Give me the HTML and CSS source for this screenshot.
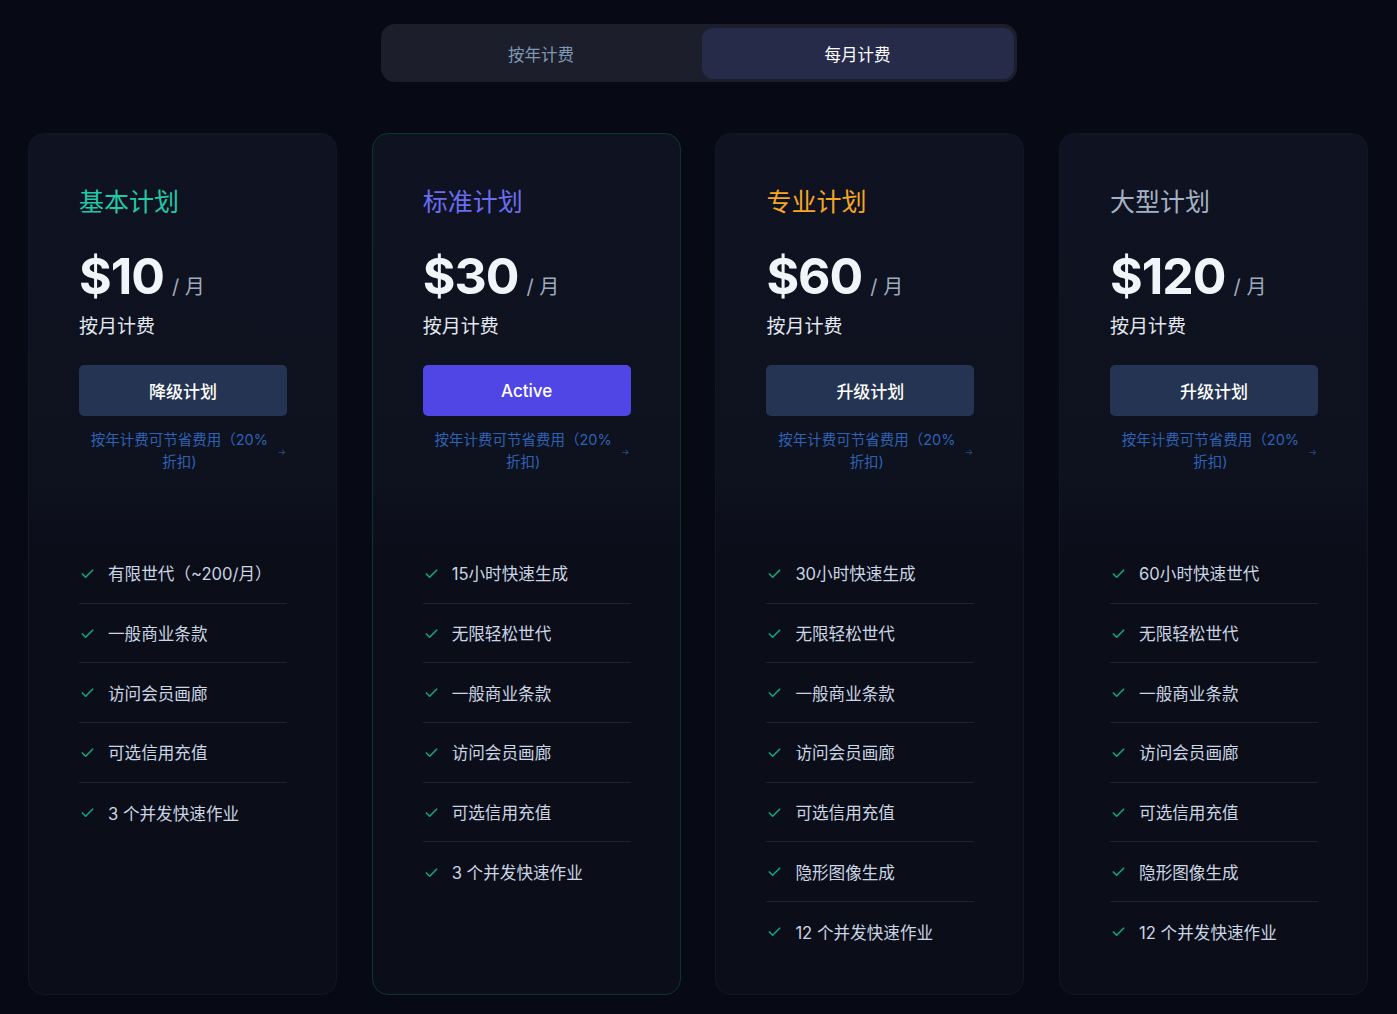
FILE: index.html
```html
<!DOCTYPE html>
<html lang="zh">
<head>
<meta charset="utf-8">
<title>Pricing</title>
<link rel="stylesheet" href="styles.css">
</head>
<body>
<div class="page">
  <div class="toggle">
    <button class="toggle-btn">按年计费</button>
    <button class="toggle-btn active">每月计费</button>
  </div>

  <div class="cards">
    <div class="card">
      <div class="card-top">
        <h2 class="title teal">基本计划</h2>
        <div class="price"><span class="amount">$10</span><span class="per">/ 月</span></div>
        <div class="billing">按月计费</div>
        <button class="cta">降级计划</button>
        <div class="note"><span class="note-text">按年计费可节省费用（20%折扣)</span><span class="arrow">→</span></div>
      </div>
      <ul class="features">
        <li><svg class="check" viewBox="0 0 16 16"><polyline points="2.5,8.5 6,12 13.5,4.5"/></svg><span>有限世代（~200/月）</span></li>
        <li><svg class="check" viewBox="0 0 16 16"><polyline points="2.5,8.5 6,12 13.5,4.5"/></svg><span>一般商业条款</span></li>
        <li><svg class="check" viewBox="0 0 16 16"><polyline points="2.5,8.5 6,12 13.5,4.5"/></svg><span>访问会员画廊</span></li>
        <li><svg class="check" viewBox="0 0 16 16"><polyline points="2.5,8.5 6,12 13.5,4.5"/></svg><span>可选信用充值</span></li>
        <li><svg class="check" viewBox="0 0 16 16"><polyline points="2.5,8.5 6,12 13.5,4.5"/></svg><span>3 个并发快速作业</span></li>
      </ul>
    </div>

    <div class="card featured">
      <div class="card-top">
        <h2 class="title indigo">标准计划</h2>
        <div class="price"><span class="amount">$30</span><span class="per">/ 月</span></div>
        <div class="billing">按月计费</div>
        <button class="cta primary">Active</button>
        <div class="note"><span class="note-text">按年计费可节省费用（20%折扣)</span><span class="arrow">→</span></div>
      </div>
      <ul class="features">
        <li><svg class="check" viewBox="0 0 16 16"><polyline points="2.5,8.5 6,12 13.5,4.5"/></svg><span>15小时快速生成</span></li>
        <li><svg class="check" viewBox="0 0 16 16"><polyline points="2.5,8.5 6,12 13.5,4.5"/></svg><span>无限轻松世代</span></li>
        <li><svg class="check" viewBox="0 0 16 16"><polyline points="2.5,8.5 6,12 13.5,4.5"/></svg><span>一般商业条款</span></li>
        <li><svg class="check" viewBox="0 0 16 16"><polyline points="2.5,8.5 6,12 13.5,4.5"/></svg><span>访问会员画廊</span></li>
        <li><svg class="check" viewBox="0 0 16 16"><polyline points="2.5,8.5 6,12 13.5,4.5"/></svg><span>可选信用充值</span></li>
        <li><svg class="check" viewBox="0 0 16 16"><polyline points="2.5,8.5 6,12 13.5,4.5"/></svg><span>3 个并发快速作业</span></li>
      </ul>
    </div>

    <div class="card">
      <div class="card-top">
        <h2 class="title amber">专业计划</h2>
        <div class="price"><span class="amount">$60</span><span class="per">/ 月</span></div>
        <div class="billing">按月计费</div>
        <button class="cta">升级计划</button>
        <div class="note"><span class="note-text">按年计费可节省费用（20%折扣)</span><span class="arrow">→</span></div>
      </div>
      <ul class="features">
        <li><svg class="check" viewBox="0 0 16 16"><polyline points="2.5,8.5 6,12 13.5,4.5"/></svg><span>30小时快速生成</span></li>
        <li><svg class="check" viewBox="0 0 16 16"><polyline points="2.5,8.5 6,12 13.5,4.5"/></svg><span>无限轻松世代</span></li>
        <li><svg class="check" viewBox="0 0 16 16"><polyline points="2.5,8.5 6,12 13.5,4.5"/></svg><span>一般商业条款</span></li>
        <li><svg class="check" viewBox="0 0 16 16"><polyline points="2.5,8.5 6,12 13.5,4.5"/></svg><span>访问会员画廊</span></li>
        <li><svg class="check" viewBox="0 0 16 16"><polyline points="2.5,8.5 6,12 13.5,4.5"/></svg><span>可选信用充值</span></li>
        <li><svg class="check" viewBox="0 0 16 16"><polyline points="2.5,8.5 6,12 13.5,4.5"/></svg><span>隐形图像生成</span></li>
        <li><svg class="check" viewBox="0 0 16 16"><polyline points="2.5,8.5 6,12 13.5,4.5"/></svg><span>12 个并发快速作业</span></li>
      </ul>
    </div>

    <div class="card">
      <div class="card-top">
        <h2 class="title slate">大型计划</h2>
        <div class="price"><span class="amount">$120</span><span class="per">/ 月</span></div>
        <div class="billing">按月计费</div>
        <button class="cta">升级计划</button>
        <div class="note"><span class="note-text">按年计费可节省费用（20%折扣)</span><span class="arrow">→</span></div>
      </div>
      <ul class="features">
        <li><svg class="check" viewBox="0 0 16 16"><polyline points="2.5,8.5 6,12 13.5,4.5"/></svg><span>60小时快速世代</span></li>
        <li><svg class="check" viewBox="0 0 16 16"><polyline points="2.5,8.5 6,12 13.5,4.5"/></svg><span>无限轻松世代</span></li>
        <li><svg class="check" viewBox="0 0 16 16"><polyline points="2.5,8.5 6,12 13.5,4.5"/></svg><span>一般商业条款</span></li>
        <li><svg class="check" viewBox="0 0 16 16"><polyline points="2.5,8.5 6,12 13.5,4.5"/></svg><span>访问会员画廊</span></li>
        <li><svg class="check" viewBox="0 0 16 16"><polyline points="2.5,8.5 6,12 13.5,4.5"/></svg><span>可选信用充值</span></li>
        <li><svg class="check" viewBox="0 0 16 16"><polyline points="2.5,8.5 6,12 13.5,4.5"/></svg><span>隐形图像生成</span></li>
        <li><svg class="check" viewBox="0 0 16 16"><polyline points="2.5,8.5 6,12 13.5,4.5"/></svg><span>12 个并发快速作业</span></li>
      </ul>
    </div>
  </div>
</div>
</body>
</html>
```

FILE: styles.css
```css
* { box-sizing: border-box; }

html, body {
  margin: 0;
  padding: 0;
  background: #070a14;
}

body {
  font-family: Inter, "Noto Sans CJK SC", sans-serif;
  color: #e2e8f0;
  height: 1014px;
  overflow: hidden;
}

.page {
  padding: 24px 28px 0;
}

.toggle {
  width: 636px;
  height: 58px;
  margin: 0 auto;
  padding: 4px 3px 3px 4px;
  background: #1c1f2b;
  border-radius: 14px;
  display: grid;
  grid-template-columns: 1fr 312px;
}

.toggle-btn {
  border: 0;
  background: transparent;
  font-family: Inter, "Noto Sans CJK SC", sans-serif;
  font-size: 16.5px;
  color: #7f97b4;
  border-radius: 11px;
  cursor: pointer;
  padding: 0 4px 0 0;
}

.toggle-btn.active {
  background: #272b4a;
  color: #ffffff;
  padding: 0;
}

.cards {
  margin-top: 51px;
  display: grid;
  grid-template-columns: repeat(4, 309px);
  column-gap: 34.7px;
}

.card {
  height: 862px;
  border-radius: 16px;
  border: 1px solid #121625;
  background: linear-gradient(to bottom, #0f1220 0%, #0e111e 40%, #0b0e19 50%, #0b0e19 100%);
  padding: 50px 49px 30px 50px;
}

.card.featured {
  border-color: #0d3431;
}

.card-top {
  display: flex;
  flex-direction: column;
}

.title {
  margin: 0;
  font-size: 25px;
  line-height: 36px;
  font-weight: 400;
}

.teal { color: #22c9a6; }
.indigo { color: #6a6df2; }
.amber { color: #f5a623; }
.slate { color: #a5b1c4; }

.price {
  margin-top: 28px;
  display: flex;
  align-items: baseline;
  height: 56px;
}

.amount {
  font-size: 50px;
  line-height: 56px;
  font-weight: 700;
  color: #f1f5f9;
  letter-spacing: -1px;
}

.per {
  margin-left: 8px;
  font-size: 20px;
  color: #9eabbf;
}

.billing {
  margin-top: 9px;
  font-size: 19px;
  line-height: 28px;
  color: #e2e8f0;
}

.cta {
  margin-top: 24px;
  height: 51px;
  border: 0;
  border-radius: 5px;
  background: #243452;
  color: #ffffff;
  font-family: Inter, "Noto Sans CJK SC", sans-serif;
  font-size: 17px;
  font-weight: 500;
  cursor: pointer;
}

.cta.primary {
  background: #4f46e5;
}

.note {
  margin-top: 13px;
  display: flex;
  align-items: center;
  justify-content: flex-end;
  color: #2e62b5;
}

.note-text {
  width: 186px;
  text-align: center;
  font-size: 14.5px;
  line-height: 22px;
}

.arrow {
  margin-left: 5px;
  margin-right: 1px;
  font-size: 9px;
  color: #2b4f85;
}

.features {
  list-style: none;
  margin: 71px 0 0;
  padding: 0;
}

.features li {
  display: flex;
  align-items: center;
  height: 59.7px;
  border-bottom: 1px solid #1c2231;
  font-size: 16.6px;
  color: #cbd5e4;
}

.features li:last-child {
  border-bottom: 0;
}

.check {
  width: 15px;
  height: 15px;
  margin-left: 1px;
  margin-right: 13px;
  fill: none;
  stroke: #12a67b;
  stroke-width: 1.7;
  stroke-linecap: round;
  stroke-linejoin: round;
  flex: none;
}
```
